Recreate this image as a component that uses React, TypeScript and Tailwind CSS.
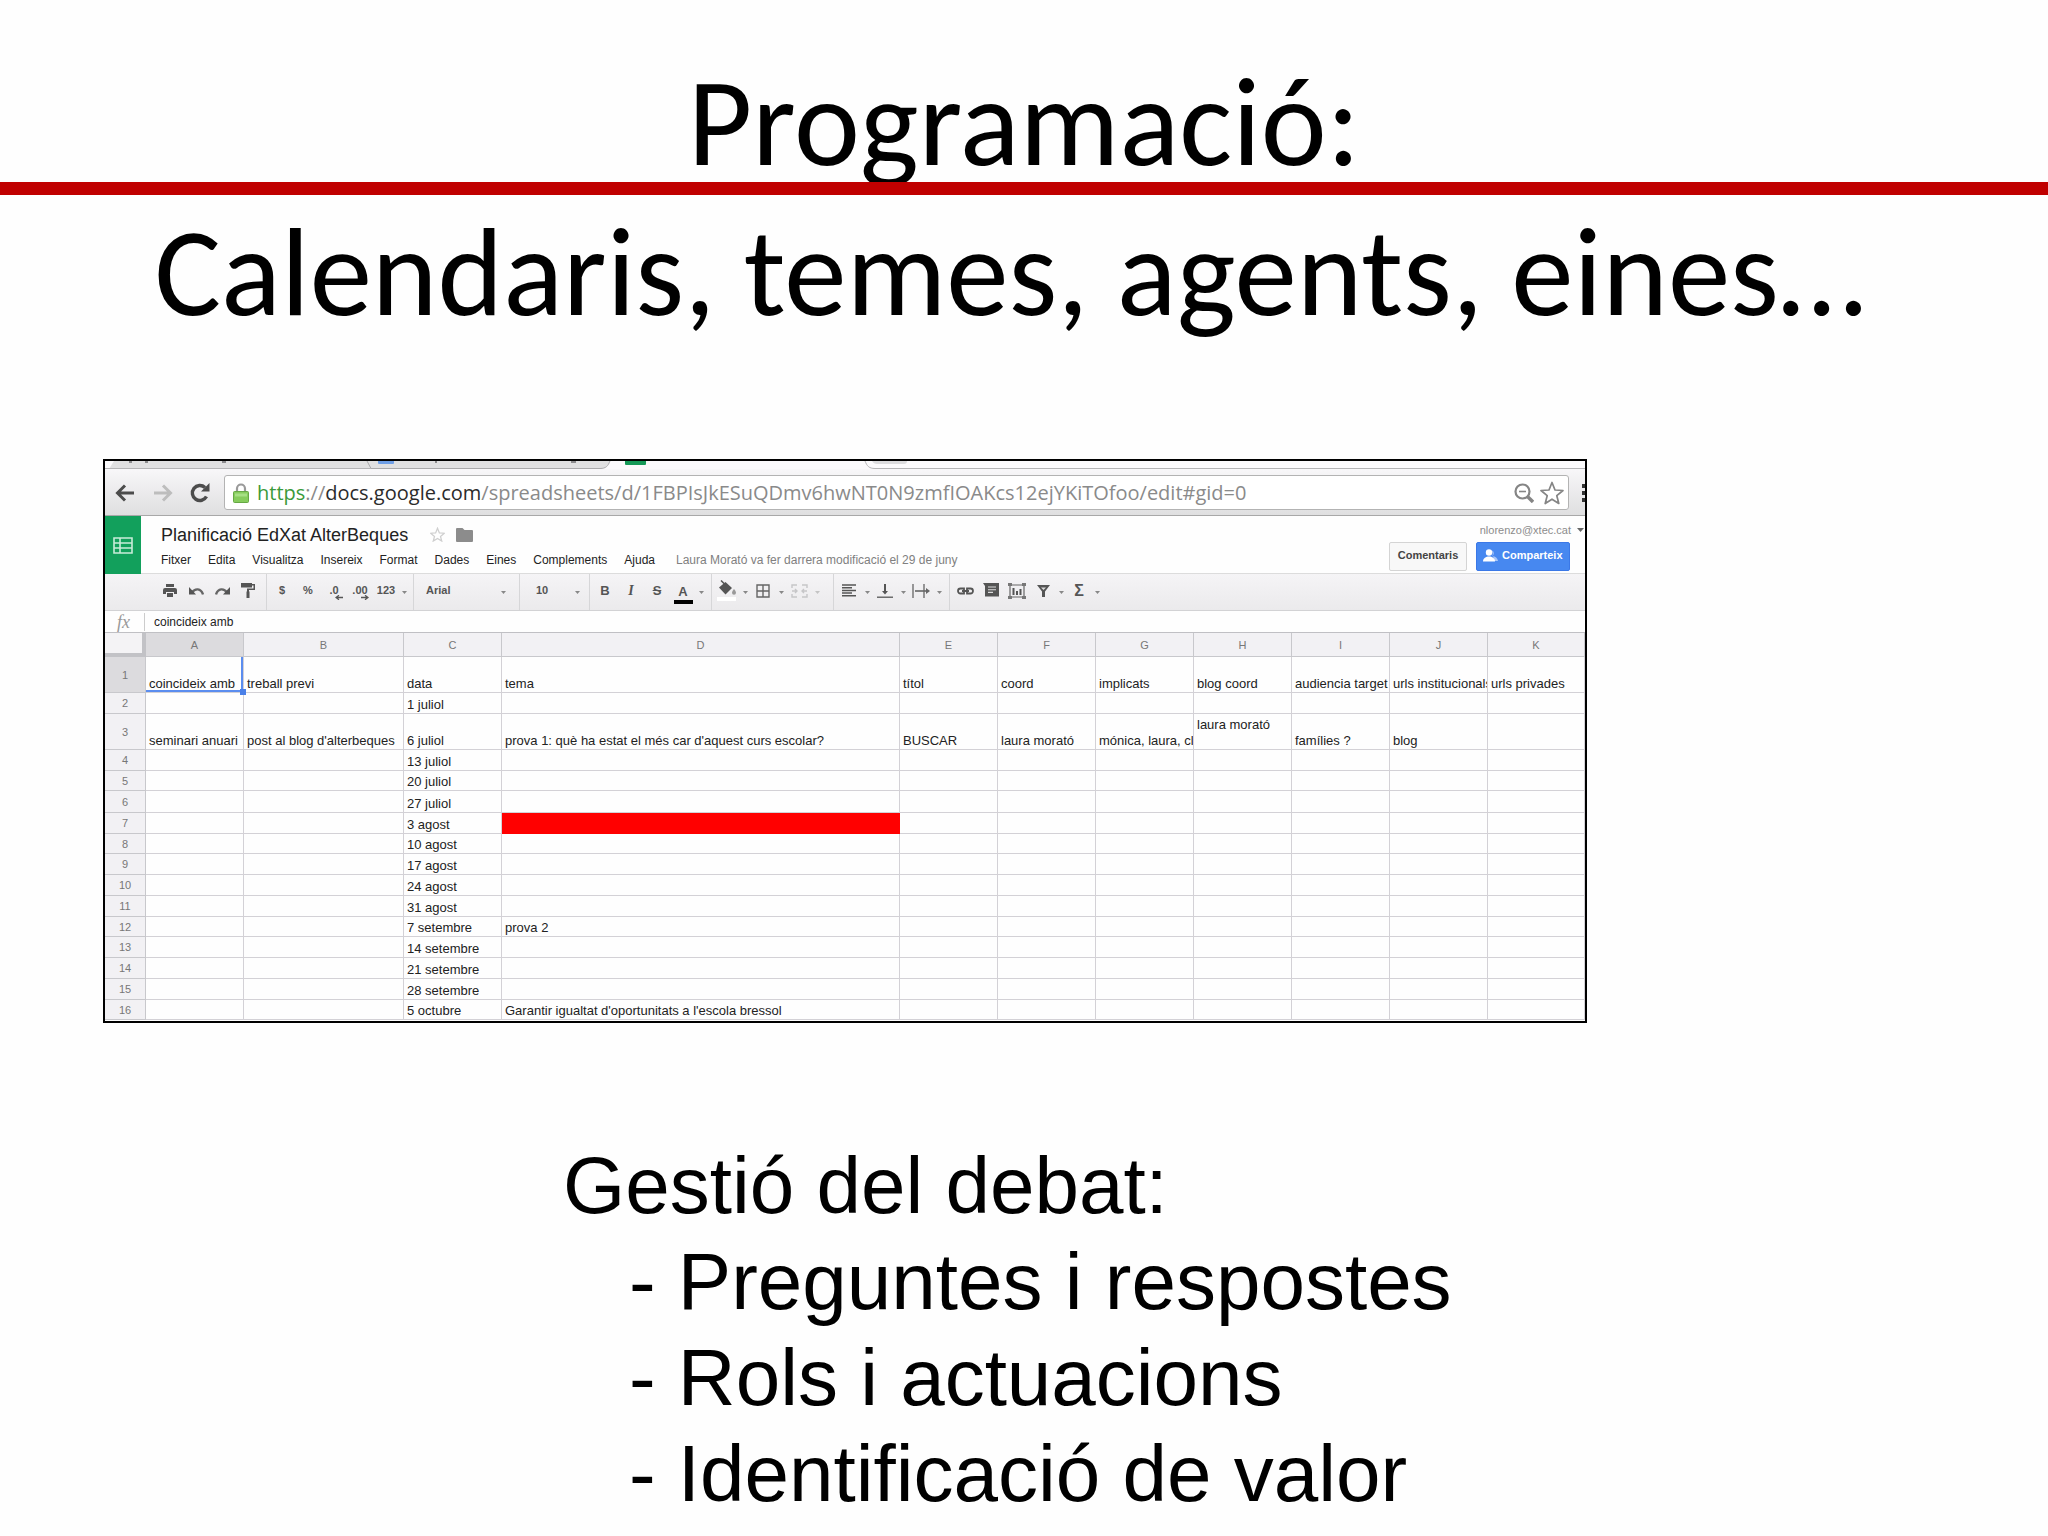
import type { ReactNode } from "react";
import clsx from "clsx";

const MENUS = ["Fitxer", "Edita", "Visualitza", "Insereix", "Format", "Dades", "Eines", "Complements", "Ajuda"];

const COLUMNS = [
  { name: "A", width: "w-[98px]" },
  { name: "B", width: "w-[160px]" },
  { name: "C", width: "w-[98px]" },
  { name: "D", width: "w-[398px]" },
  { name: "E", width: "w-[98px]" },
  { name: "F", width: "w-[98px]" },
  { name: "G", width: "w-[98px]" },
  { name: "H", width: "w-[98px]" },
  { name: "I", width: "w-[98px]" },
  { name: "J", width: "w-[98px]" },
  { name: "K", width: "w-auto" },
];

interface SheetRow {
  height: string;
  cells: Record<string, string>;
}

const ROWS: SheetRow[] = [
  {
    height: "h-[36px]",
    cells: {
      A: "coincideix amb",
      B: "treball previ",
      C: "data",
      D: "tema",
      E: "títol",
      F: "coord",
      G: "implicats",
      H: "blog coord",
      I: "audiencia target",
      J: "urls institucionals",
      K: "urls privades",
    },
  },
  { height: "h-[21px]", cells: { C: "1 juliol" } },
  {
    height: "h-[36px]",
    cells: {
      A: "seminari anuari",
      B: "post al blog d'alterbeques",
      C: "6 juliol",
      D: "prova 1: què ha estat el més car d'aquest curs escolar?",
      E: "BUSCAR",
      F: "laura morató",
      G: "mónica, laura, cl",
      H: "laura morató\n\u00a0",
      I: "famílies ?",
      J: "blog",
    },
  },
  { height: "h-[21px]", cells: { C: "13 juliol" } },
  { height: "h-[20px]", cells: { C: "20 juliol" } },
  { height: "h-[22px]", cells: { C: "27 juliol" } },
  { height: "h-[21px]", cells: { C: "3 agost" } },
  { height: "h-[20px]", cells: { C: "10 agost" } },
  { height: "h-[21px]", cells: { C: "17 agost" } },
  { height: "h-[21px]", cells: { C: "24 agost" } },
  { height: "h-[21px]", cells: { C: "31 agost" } },
  { height: "h-[20px]", cells: { C: "7 setembre", D: "prova 2" } },
  { height: "h-[21px]", cells: { C: "14 setembre" } },
  { height: "h-[21px]", cells: { C: "21 setembre" } },
  { height: "h-[21px]", cells: { C: "28 setembre" } },
  { height: "h-[20px]", cells: { C: "5 octubre", D: "Garantir igualtat d'oportunitats a l'escola bressol" } },
];

const Caret = ({ faded = false }: { faded?: boolean }) => (
  <span className="flex w-[10px] justify-center pt-1">
    <svg viewBox="0 0 5 3" className={clsx("h-[3px] w-[5px]", faded ? "fill-[#c4c4c4]" : "fill-[#888]")}>
      <path d="M0 0h5L2.500 3z" />
    </svg>
  </span>
);

const ToolButton = ({ label, children }: { label: string; children: ReactNode }) => (
  <button type="button" aria-label={label} className="flex h-full w-[26px] items-center justify-center">
    {children}
  </button>
);

const ToolGroup = ({ className, children }: { className?: string; children: ReactNode }) => (
  <div className={clsx("flex h-full items-center pb-[3px]", className)}>{children}</div>
);

const TabStrip = () => (
  <svg className="block h-[8px] w-full bg-[#fbfafc]" aria-hidden="true">
    <path d="M4 8 9 0H505C503 5 501 7.500 495 7.500z" fill="#e0e0e1" />
    <path d="M262 0 266 7.500H495C501 7.500 503 5 505 0" fill="none" stroke="#a9a9ab" />
    <path d="M0 7.500H266" stroke="#b4b4b6" />
    <path d="M24 0h3v2h-3zM40 0h3v2h-3zM117 0h4v2h-4zM330 0h2v2h-2zM466 0h5v2h-5z" fill="#8b8b8d" />
    <rect x="273" y="-3" width="16" height="6" rx="1" fill="#6f9fe6" />
    <rect x="520" y="-3" width="21" height="7" rx="1" fill="#159957" />
    <path d="M760 0C762 5 764 7.500 770 7.500H1480" fill="none" stroke="#b4b4b6" />
    <path d="M767 0C768 2 770 3 772 3H799C801 3 802 2 802 0z" fill="#dcdcde" />
  </svg>
);

const AddressBar = () => (
  <div className="flex h-[47px] items-center overflow-hidden border-b border-[#a8a8a8] bg-linear-to-b from-[#f8f7f9] to-[#dfdfe0] pt-px pl-[10px]">
    <button type="button" aria-label="Enrere" className="w-[38px]">
      <svg viewBox="0 0 20 18" className="h-[18px] w-[20px]" fill="none" stroke="#4c4c4c" strokeWidth="3">
        <path d="M19 9H3M10 1.500 2.500 9l7.500 7.500" />
      </svg>
    </button>
    <button type="button" aria-label="Endavant" className="w-[37px]">
      <svg viewBox="0 0 20 18" className="h-[18px] w-[20px]" fill="none" stroke="#bdbdbd" strokeWidth="3">
        <path d="M1 9h16M10 1.500 17.500 9 10 16.500" />
      </svg>
    </button>
    <button type="button" aria-label="Recarrega" className="w-[34px]">
      <svg viewBox="0 0 20 20" className="h-[20px] w-[20px]">
        <path d="M16.500 13.500A7.500 7.500 0 1 1 15 4.500" fill="none" stroke="#4c4c4c" strokeWidth="3.400" />
        <path d="M19.500 0v8.500H11z" fill="#4c4c4c" />
      </svg>
    </button>
    <div className="mr-[13px] flex h-[35px] flex-1 items-center rounded-[3px] border border-[#b3b3b3] bg-white pl-[8px]">
      <svg viewBox="0 0 16 20" className="h-[20px] w-[16px]">
        <path d="M4 9V5.500a4 4 0 0 1 8 0V9" fill="none" stroke="#9a9a9a" strokeWidth="2.200" />
        <rect x=".5" y="8.500" width="15" height="11" rx="1" fill="#86cc5c" stroke="#66a844" />
        <path d="M2 10.500h12v3H2z" fill="#a6df84" />
      </svg>
      <a href="#sheet" className="ml-[8px] font-['Open_Sans',sans-serif] text-[20px] leading-[28px] whitespace-nowrap text-[#8a8a8a]">
        <span className="text-[#3a9a3a]">https</span>://<span className="text-[#2b2b2b]">docs.google.com</span>
        /spreadsheets/d/1FBPIsJkESuQDmv6hwNT0N9zmfIOAKcs12ejYKiTOfoo/edit#gid=0
      </a>
      <button type="button" aria-label="Zoom" className="ml-auto">
        <svg viewBox="0 0 20 20" className="h-[20px] w-[20px]" fill="none" stroke="#858585">
          <circle cx="8.500" cy="8.500" r="7" strokeWidth="2.200" />
          <path d="M5 8.500h7" strokeWidth="1.600" />
          <path d="m13.500 13.500 5.500 5.500" strokeWidth="3.400" />
        </svg>
      </button>
      <button type="button" aria-label="Marcador" className="mr-[4px] ml-[6px]">
        <svg viewBox="0 0 24 24" className="h-[24px] w-[24px]" fill="#fff" stroke="#858585" strokeWidth="1.700" strokeLinejoin="round">
          <path d="m12 1.500 3 7.500 8 .5-6.200 5.200 2 7.800L12 18.200 5.200 22.500l2-7.800L1 9.500 9 9z" />
        </svg>
      </button>
    </div>
    <svg viewBox="0 0 3 18" className="h-[18px] w-[3px]" fill="#333">
      <path d="M0 0h3v4H0zM0 7h3v4H0zM0 14h3v4H0z" />
    </svg>
  </div>
);

const DocHeader = () => (
  <div className="flex h-[58px] border-b border-[#dcdcdc] bg-[#fefefe]">
    <div className="flex h-[58px] w-[36px] items-center justify-center bg-[#12a05c]">
      <svg viewBox="0 0 20 17" className="h-[17px] w-[20px]" fill="none" stroke="#c9ecd9" strokeWidth="1.600">
        <path d="M1 1h18v15H1zM1 6h18M1 11h18M7 1v15" />
      </svg>
    </div>
    <div className="flex flex-col pl-[20px]">
      <div className="flex h-[36px] items-center pt-px">
        <h2 className="text-[18px] leading-[24px] text-[#222]">Planificació EdXat AlterBeques</h2>
        <svg viewBox="0 0 24 24" className="ml-[22px] h-[15px] w-[15px]" fill="none" stroke="#cfcfcf" strokeWidth="2">
          <path d="m12 2 3 7.500 8 .5-6.200 5.200 2 7.300L12 18.200 5.200 22.500l2-7.300L1 10 9 9.500z" />
        </svg>
        <svg viewBox="0 0 17 14" className="ml-[11px] h-[14px] w-[17px]" fill="#8c8c8c">
          <path d="M1 0h5.500l2 2H16a1 1 0 0 1 1 1v10a1 1 0 0 1-1 1H1a1 1 0 0 1-1-1V1a1 1 0 0 1 1-1z" />
        </svg>
      </div>
      <nav className="flex gap-[17px] text-[12px] leading-[16px] text-[#222]">
        {MENUS.map((menu) => (
          <button type="button" key={menu}>
            {menu}
          </button>
        ))}
        <span className="ml-[4px] text-[#808080]">Laura Morató va fer darrera modificació el 29 de juny</span>
      </nav>
    </div>
    <div className="ml-auto flex flex-col items-end pt-[6px]">
      <button type="button" className="flex items-center pr-[1px] text-[11px] leading-[16px] text-[#8c8c8c]">
        nlorenzo@xtec.cat
        <svg viewBox="0 0 7 4" className="ml-[6px] h-[4px] w-[7px]" fill="#666">
          <path d="M0 0h7L3.500 4z" />
        </svg>
      </button>
      <div className="mt-[4px] flex gap-[9px] pr-[15px] text-[11px] font-bold">
        <button type="button" className="h-[29px] w-[78px] rounded-[2px] border border-[#d4d4d4] bg-[#f8f8f8] pb-[2px] text-[#444]">
          Comentaris
        </button>
        <button type="button" className="flex h-[29px] w-[94px] items-center rounded-[2px] border border-[#3b78e7] bg-[#4788f0] pb-[2px] pl-[6px] text-white">
          <svg viewBox="0 0 15 13" className="mr-[4px] h-[13px] w-[15px]">
            <path d="M9 1.500a3 3 0 0 1 0 5.500c3.500.5 5.500 2 6 5h-4z" fill="#a9c7fa" />
            <circle cx="6" cy="3.500" r="3.200" fill="#fff" />
            <path d="M0 12.500C0 9 3 7.500 6 7.500s6 1.500 6 5z" fill="#fff" />
          </svg>
          Comparteix
        </button>
      </div>
    </div>
  </div>
);

const Toolbar = () => (
  <div className="flex h-[37px] items-center divide-x divide-[#d6d6d8] border-b border-[#d2d2d4] bg-linear-to-b from-[#f5f4f6] to-[#ebeaec] text-[12px] font-bold text-[#555]">
    <ToolGroup className="w-[162px] pl-[52px]">
      <ToolButton label="Imprimeix">
        <svg viewBox="0 0 14 13" className="h-[13px] w-[14px]" fill="#555">
          <path d="M3 0h8v3H3zM2 4h10a2 2 0 0 1 2 2v4h-3V8H3v2H0V6a2 2 0 0 1 2-2zM4 9h6v4H4z" />
        </svg>
      </ToolButton>
      <ToolButton label="Desfés">
        <svg viewBox="0 0 15 8" className="h-[8px] w-[15px]">
          <path d="M3 5.500C6 1 12 1 14 7.500" fill="none" stroke="#666" strokeWidth="2.400" />
          <path d="M0 0v7.500h7z" fill="#555" />
        </svg>
      </ToolButton>
      <ToolButton label="Refés">
        <svg viewBox="0 0 15 8" className="h-[8px] w-[15px]">
          <path d="M12 5.500C9 1 3 1 1 7.500" fill="none" stroke="#666" strokeWidth="2.400" />
          <path d="M15 0v7.500H8z" fill="#555" />
        </svg>
      </ToolButton>
      <ToolButton label="Copia el format">
        <svg viewBox="0 0 14 15" className="h-[15px] w-[14px]" fill="#555">
          <path d="M0 0h11v4.500H0zM11 1h3v6H8v1.500H6V5.500h6.500v-3H11zM5.500 8.500h3V15h-3z" />
        </svg>
      </ToolButton>
    </ToolGroup>
    <ToolGroup className="w-[147px] pl-[2px] text-[11px]">
      <ToolButton label="Moneda">$</ToolButton>
      <ToolButton label="Percentatge">%</ToolButton>
      <ToolButton label="Menys decimals">
        <span className="relative">
          .0
          <svg viewBox="0 0 8 5" className="absolute top-[13px] left-[6px] h-[5px] w-[8px]">
            <path d="M8 2.500H2M4 .3 1 2.500l3 2.200" fill="none" stroke="#555" strokeWidth="1.300" />
          </svg>
        </span>
      </ToolButton>
      <ToolButton label="Més decimals">
        <span className="relative">
          .00
          <svg viewBox="0 0 8 5" className="absolute top-[13px] left-[9px] h-[5px] w-[8px]">
            <path d="M0 2.500h6M4 .3l3 2.200-3 2.200" fill="none" stroke="#555" strokeWidth="1.300" />
          </svg>
        </span>
      </ToolButton>
      <ToolButton label="Més formats">123</ToolButton>
      <Caret />
    </ToolGroup>
    <ToolGroup className="w-[106px] pl-[12px] text-[11px]">
      <select aria-label="Tipus de lletra" className="w-[72px] appearance-none bg-transparent">
        <option>Arial</option>
      </select>
      <Caret />
    </ToolGroup>
    <ToolGroup className="w-[70px] pl-[16px] text-[11px]">
      <select aria-label="Mida" className="w-[36px] appearance-none bg-transparent">
        <option>10</option>
      </select>
      <Caret />
    </ToolGroup>
    <ToolGroup className="w-[122px] pl-[2px] text-[13px]">
      <ToolButton label="Negreta">B</ToolButton>
      <ToolButton label="Cursiva">
        <i className="font-['Liberation_Serif',serif] text-[14px]">I</i>
      </ToolButton>
      <ToolButton label="Ratllat">
        <s>S</s>
      </ToolButton>
      <ToolButton label="Color del text">
        <span className="mt-[6px] flex w-[19px] flex-col items-center border-b-4 border-black leading-[16px]">A</span>
      </ToolButton>
      <Caret />
    </ToolGroup>
    <ToolGroup className="w-[122px] pl-[2px]">
      <ToolButton label="Color d'emplenament">
        <svg viewBox="0 0 20 21" className="h-[21px] w-[20px]">
          <path d="M2 7.500 8.500 2l6.500 6-6.500 6.500z" fill="#555" />
          <path d="M4 .5 9.500 6" stroke="#555" strokeWidth="1.500" />
          <path d="M17 9c1.500 2 2 3 2 3.800a2 2 0 0 1-4 0c0-.8.5-1.800 2-3.800z" fill="#999" />
          <path d="M0 17h19v4H0z" fill="#fff" />
        </svg>
      </ToolButton>
      <Caret />
      <ToolButton label="Vores">
        <svg viewBox="0 0 14 14" className="h-[14px] w-[14px]" fill="none" stroke="#666" strokeWidth="1.400">
          <path d="M1 1h12v12H1zM7 1v12M1 7h12" />
        </svg>
      </ToolButton>
      <Caret />
      <ToolButton label="Combina cel·les">
        <svg viewBox="0 0 17 14" className="h-[14px] w-[17px]" fill="none" stroke="#c6c6c8" strokeWidth="1.400">
          <path d="M6 1H1v3M11 1h5v3M6 13H1v-3M11 13h5v-3M1 7h5M4 5l2 2-2 2M16 7h-5M13 5l-2 2 2 2" />
        </svg>
      </ToolButton>
      <Caret faded />
    </ToolGroup>
    <ToolGroup className="w-[116px] pl-[2px]">
      <ToolButton label="Alineació horitzontal">
        <svg viewBox="0 0 14 13" className="h-[13px] w-[14px]" stroke="#555" strokeWidth="1.500">
          <path d="M0 1h14M0 3.700h10M0 6.400h14M0 9.100h10M0 11.800h14" />
        </svg>
      </ToolButton>
      <Caret />
      <ToolButton label="Alineació vertical">
        <svg viewBox="0 0 16 14" className="h-[14px] w-[16px]" stroke="#555" fill="#555">
          <path d="M8 0v8" strokeWidth="2" />
          <path d="M5 7h6l-3 3.500z" stroke="none" />
          <path d="M0 13.200h16" strokeWidth="1.300" />
        </svg>
      </ToolButton>
      <Caret />
      <ToolButton label="Ajust del text">
        <svg viewBox="0 0 18 14" className="h-[14px] w-[18px]" stroke="#666" fill="#666">
          <path d="M1 0v14M12 0v14" strokeWidth="1.300" />
          <path d="M3 7h12" strokeWidth="1.600" />
          <path d="M14 4l4 3-4 3z" stroke="none" />
        </svg>
      </ToolButton>
      <Caret />
    </ToolGroup>
    <ToolGroup className="pl-[2px]">
      <ToolButton label="Enllaç">
        <svg viewBox="0 0 17 8" className="h-[8px] w-[17px]" fill="none" stroke="#555" strokeWidth="1.800">
          <path d="M7 1.500H3.500a2.500 2.500 0 0 0 0 5H7zM10 1.500h3.500a2.500 2.500 0 0 1 0 5H10zM5 4h7" />
        </svg>
      </ToolButton>
      <ToolButton label="Comentari">
        <svg viewBox="0 0 16 15" className="h-[15px] w-[16px]">
          <path d="M0 0h16v13.500H2V3z" fill="#555" />
          <path d="M5 4h8M5 6.700h8M5 9.400h5" stroke="#ddd" strokeWidth="1.100" />
        </svg>
      </ToolButton>
      <ToolButton label="Gràfic">
        <svg viewBox="0 0 18 16" className="h-[16px] w-[18px]">
          <path d="M2 2h14v12H2z" fill="none" stroke="#666" strokeWidth="1.200" />
          <path d="M0 0h4v3H0zM14 0h4v3h-4zM0 13h4v3H0zM14 13h4v3h-4z" fill="#777" />
          <path d="M4.500 5h2v7h-2zM8 8h2v4H8zM11.500 6h2v6h-2z" fill="#555" />
        </svg>
      </ToolButton>
      <ToolButton label="Filtre">
        <svg viewBox="0 0 13 12" className="h-[12px] w-[13px]">
          <path d="M0 0h13L8 6.500V12H5V6.500z" fill="#555" />
          <path d="M4 2.500h5L6.500 5z" fill="#ddd" />
        </svg>
      </ToolButton>
      <Caret />
      <ToolButton label="Funcions">
        <span className="text-[16px]">Σ</span>
      </ToolButton>
      <Caret />
    </ToolGroup>
  </div>
);

const FormulaBar = () => (
  <div className="flex h-[22px] items-center border-b border-[#c0c0c4] bg-[#fefefe] pl-[12px]">
    <label htmlFor="formula" className="w-[28px] border-r border-[#ccc] font-['Liberation_Serif',serif] text-[18px] leading-[18px] text-[#999] italic">
      fx
    </label>
    <input id="formula" defaultValue="coincideix amb" className="flex-1 bg-transparent pl-[9px] text-[12px] leading-[16px] text-[#222] outline-none" />
  </div>
);

const Sheet = () => (
  <table id="sheet" className="w-full table-fixed border-separate border-spacing-0 bg-[#fefefe] text-[13px] leading-[16px] text-[#222]">
    <thead>
      <tr className="h-[24px] text-[11px] text-[#777]">
        <th className="w-[41px] border-r-4 border-b-4 border-[#c2c2c6] bg-[#f4f3f5]" />
        {COLUMNS.map(({ name, width }) => (
          <th
            key={name}
            className={clsx("border-r border-b border-[#c8c8cc] p-0 font-normal", width, name === "A" ? "bg-[#dcdbde]" : "bg-[#f2f1f4]")}
          >
            {name}
          </th>
        ))}
      </tr>
    </thead>
    <tbody>
      {ROWS.map((row, index) => (
        <tr key={index} className={row.height}>
          <th
            className={clsx(
              "border-r border-b border-[#c8c8cc] p-0 text-[11px] font-normal text-[#777]",
              index === 0 ? "bg-[#dcdbde]" : "bg-[#f2f1f4]",
            )}
          >
            {index + 1}
          </th>
          {COLUMNS.map(({ name }) => {
            const selected = index === 0 && name === "A";
            const red = index === 6 && name === "D";
            return (
              <td
                key={name}
                className={clsx(
                  "border-r border-b p-0 align-bottom",
                  red ? "border-[#ff0000] bg-[#ff0000]" : "border-[#d3d1d6]",
                  selected && "relative",
                )}
              >
                <div className="overflow-hidden pl-[3px] whitespace-pre">{row.cells[name]}</div>
                {selected && (
                  <>
                    <span className="absolute inset-0 border-r-2 border-b-2 border-[#5b8def]" />
                    <span className="absolute -right-[3px] -bottom-[3px] h-[6px] w-[6px] bg-[#4a80e8]" />
                  </>
                )}
              </td>
            );
          })}
        </tr>
      ))}
    </tbody>
  </table>
);

export default function App() {
  return (
    <main className="relative min-h-screen overflow-hidden bg-[#fefefe] font-['Liberation_Sans',Arial,sans-serif] text-black">
      <h1 className="pt-[48px] text-center font-[Carlito,Calibri,Lato,sans-serif] text-[125px] leading-[150px]">
        Programació:
        <br />
        Calendaris, temes, agents, eines…&nbsp;
      </h1>
      <hr className="absolute top-[182px] left-0 h-[13px] w-full border-0 bg-[#c00000]" />

      <section className="mt-[111px] mr-[461px] ml-[103px] overflow-hidden border-2 border-black pb-px">
        <TabStrip />
        <AddressBar />
        <DocHeader />
        <Toolbar />
        <FormulaBar />
        <Sheet />
      </section>

      <section className="mt-[115px] ml-[563px] text-[80px] leading-[96px]">
        <h2>Gestió del debat:</h2>
        <ul className="pl-[66px]">
          <li>- Preguntes i respostes</li>
          <li>- Rols i actuacions</li>
          <li>- Identificació de valor</li>
        </ul>
      </section>
    </main>
  );
}
